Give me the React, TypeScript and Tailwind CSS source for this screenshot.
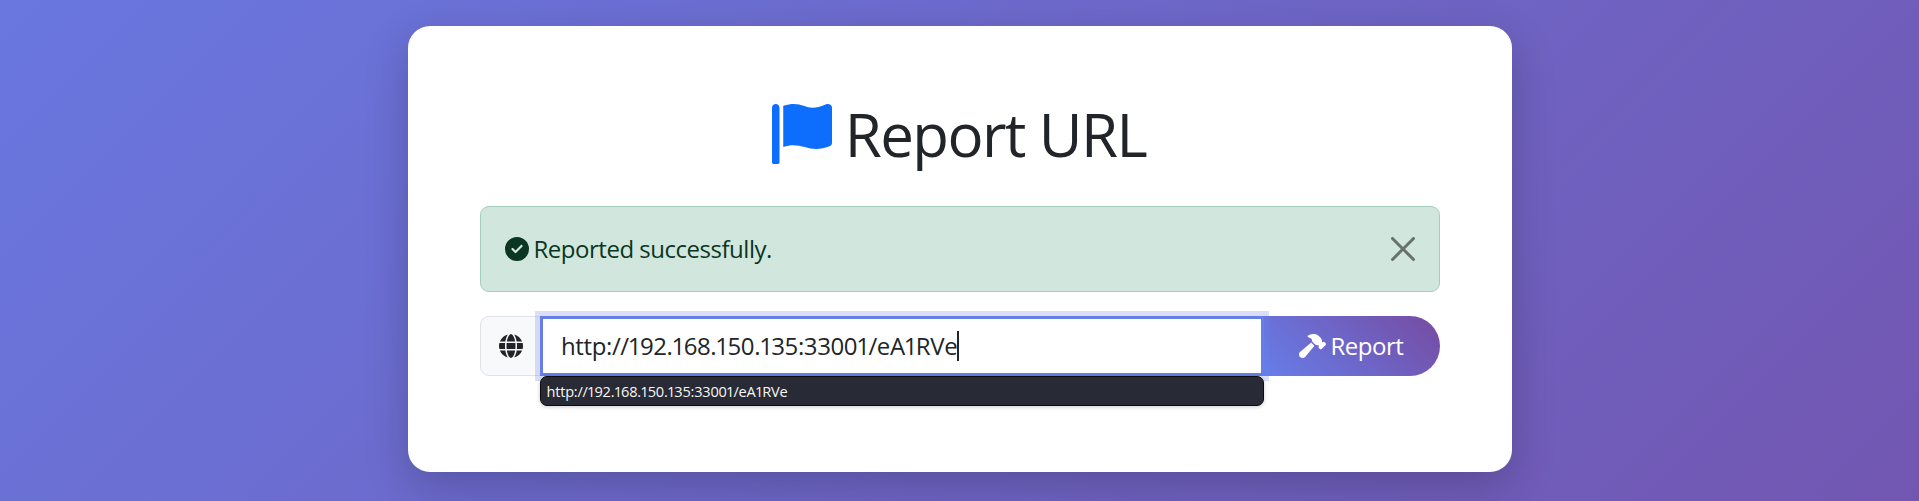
import { FaCircleCheck, FaGlobe, FaHammer } from "react-icons/fa6";

function FlagIcon() {
  return (
    <svg viewBox="0 0 512 512" fill="currentColor" className="size-[60px] text-[#0d6efd]" aria-hidden="true">
      <path d="M64 496C64 504.8 56.75 512 48 512h-32C7.25 512 0 504.8 0 496V32c0-17.75 14.25-32 32-32s32 14.25 32 32V496zM476.3 0c-6.365 0-13.01 1.35-19.34 4.233c-45.69 20.86-79.56 27.94-107.8 27.94c-59.96 0-94.81-31.86-163.9-31.87C160.9 .3055 131.6 4.867 96 15.75v350.5c32-9.984 59.87-14.1 84.85-14.1c73.63 0 124.9 31.78 198.6 31.78c31.91 0 68.02-5.971 111.1-23.09C504.1 355.9 512 344.4 512 332.1V30.73C512 11.1 495.3 0 476.3 0z" />
    </svg>
  );
}

function CloseIcon() {
  return (
    <svg viewBox="0 0 16 16" fill="#000" className="size-6" aria-hidden="true">
      <path d="M.293.293a1 1 0 0 1 1.414 0L8 6.586 14.293.293a1 1 0 1 1 1.414 1.414L9.414 8l6.293 6.293a1 1 0 0 1-1.414 1.414L8 9.414l-6.293 6.293a1 1 0 0 1-1.414-1.414L6.586 8 .293 1.707a1 1 0 0 1 0-1.414z" />
    </svg>
  );
}

/* Sets the URL with proportional-width ones. */
function UrlText({ value }: { value: string }) {
  return (
    <span className="whitespace-nowrap tracking-[-0.016em]">
      {value.split(/(1)/).map((part, i) =>
        part === "1" ? (
          <span key={i} className="-ml-[0.04em] tracking-[-0.067em]">
            1
          </span>
        ) : (
          part
        ),
      )}
    </span>
  );
}

export default function App() {
  const url = "http://192.168.150.135:33001/eA1RVe";
  return (
    <div className="h-[501px] overflow-hidden bg-[linear-gradient(135deg,#6977df_0%,#7257b2_100%)] pt-[26px] font-['Open_Sans','Noto_Sans',sans-serif] text-2xl font-[370] leading-9 text-[#212529]">
      <main className="mx-auto h-[446px] w-[1104px] rounded-[22px] bg-white p-[72px] shadow-[0_15px_45px_rgba(0,0,0,0.2)]">
        <h1 className="mb-9 flex h-[72px] items-center justify-center gap-[13px] pr-px text-[60px] leading-[72px] tracking-[-0.026em]">
          <FlagIcon />
          <span>Report URL</span>
        </h1>

        <div className="mb-6 flex h-[86px] items-center rounded-[9px] border border-[#a3cfbb] bg-[#d1e7dd] pl-[24px] pr-[24px] tracking-[-0.02em] text-[#0a3622]">
          <FaCircleCheck className="mr-[5px] size-6" />
          <span>Reported successfully.</span>
          <button className="ml-auto opacity-50" aria-label="Close">
            <CloseIcon />
          </button>
        </div>

        <form className="relative flex h-[60px]">
          <div className="flex w-[61px] items-center rounded-l-[9px] border border-[#dee2e6] bg-[#f8f9fa] pl-[18px]">
            <FaGlobe className="size-6" />
          </div>
          <div className="z-10 -ml-px flex w-[724px] items-center border-[3px] border-[#667eea] bg-white pl-[18.5px] shadow-[0_0_0_5px_rgba(102,126,234,0.25)]">
            <UrlText value={url} />
            <span className="h-[30px] w-0.5 bg-[#212529]" />
          </div>
          <button className="-ml-px flex flex-1 items-center rounded-r-full bg-[linear-gradient(45deg,#667eea,#764ba2)] pl-[36px] tracking-[-0.02em] text-white">
            <FaHammer className="mr-[5px] h-6 w-[27px]" />
            <span>Report</span>
          </button>
          <div className="absolute left-[60px] top-[60px] z-20 flex h-[30px] w-[724px] items-center rounded-[7px] border border-[#0c0c0d] bg-[#282a36] pl-1.5 text-[14.6px] text-[#f8f8f2] shadow-[0_1px_4px_rgba(0,0,0,0.2)]">
            <UrlText value={url} />
          </div>
        </form>
      </main>
    </div>
  );
}
